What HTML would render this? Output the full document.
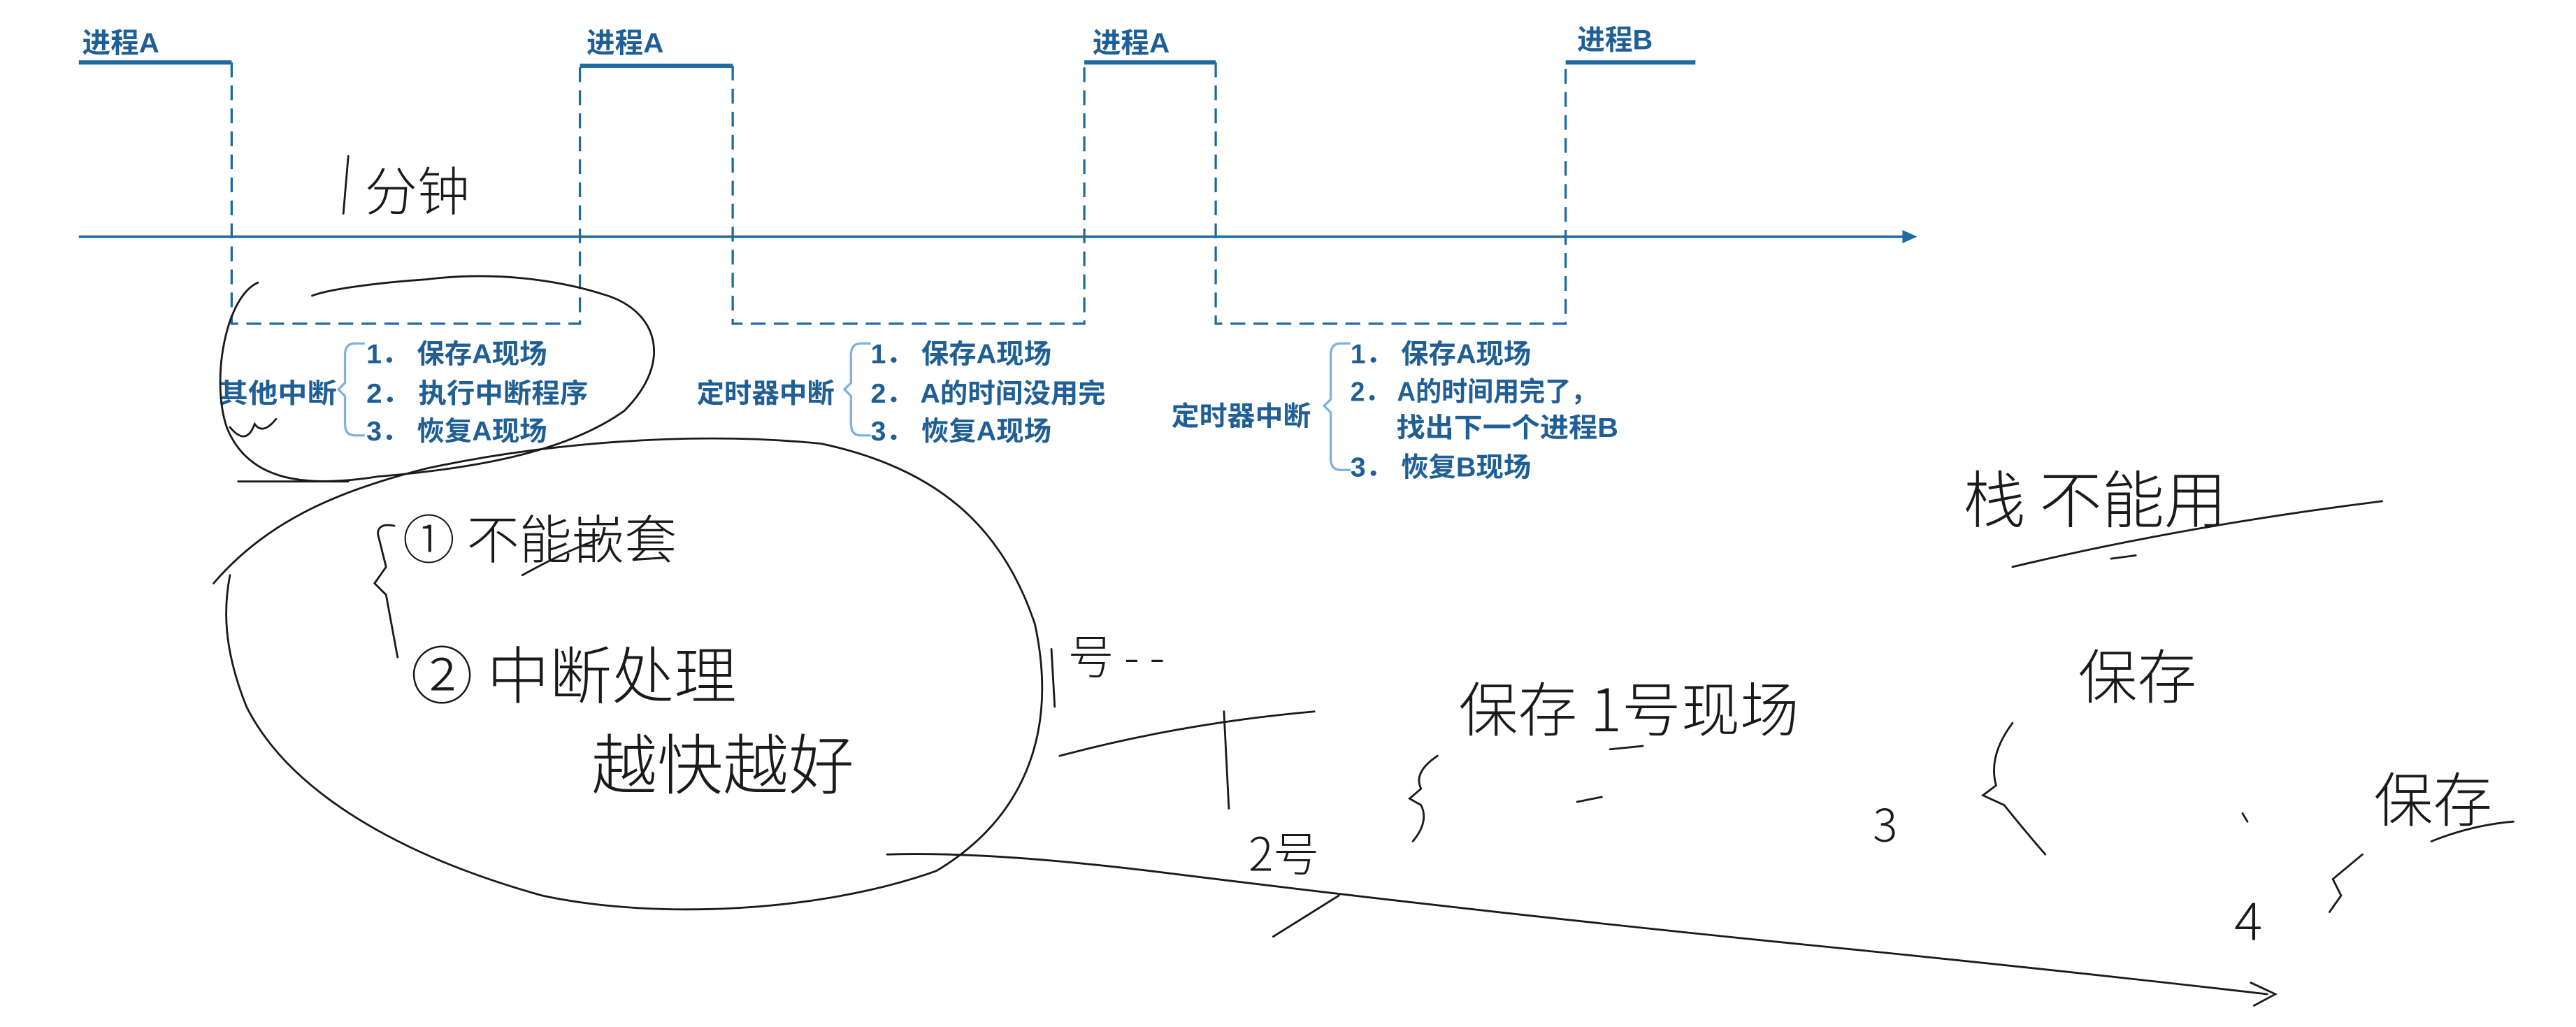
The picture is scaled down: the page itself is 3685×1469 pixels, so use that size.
<!DOCTYPE html>
<html><head><meta charset="utf-8"><style>
html,body{margin:0;padding:0;background:#fff;}
svg{display:block;}
.lb{font-family:"Liberation Sans","Noto Sans CJK SC",sans-serif;font-weight:bold;fill:#1f5f96;font-size:17px;}
.it{font-family:"Liberation Sans","Noto Sans CJK SC",sans-serif;font-weight:bold;fill:#1f5f96;font-size:16.5px;}
.hw{font-family:"Noto Sans CJK SC",sans-serif;font-weight:300;fill:#1a1a1a;}
</style></head><body>
<svg width="3685" height="1469" viewBox="0 0 1568 625" preserveAspectRatio="none">
<g stroke="#1f6aa0" fill="none">
 <path d="M48 38H141M353 40H446M660 38H740M953 38H1032" stroke-width="2.6"/>
 <path d="M141 38V197H353V40M446 40V197H660V38M740 38V197H953V38" stroke-width="1.4" stroke-dasharray="9 5"/>
 <path d="M48 144H1162" stroke-width="1.5"/>
</g>
<path d="M1158 140L1167 144L1158 148Z" fill="#1f6aa0"/>
<text class="lb" x="50" y="32" textLength="47" lengthAdjust="spacingAndGlyphs">进程A</text>
<text class="lb" x="357" y="32" textLength="47" lengthAdjust="spacingAndGlyphs">进程A</text>
<text class="lb" x="665" y="32" textLength="47" lengthAdjust="spacingAndGlyphs">进程A</text>
<text class="lb" x="960" y="30" textLength="46" lengthAdjust="spacingAndGlyphs">进程B</text>
<g stroke="#7fb0e0" fill="none" stroke-width="1.4">
 <path d="M222 209H216Q210 209 210 216V233L206 237L210 241V258Q210 265 216 265H222"/>
 <path d="M530 209H524Q518 209 518 216V233L514 237L518 241V258Q518 265 524 265H530"/>
 <path d="M822 209H816Q810 209 810 216V243L806 247L810 251V279Q810 286 816 286H822"/>
</g>
<text class="it" x="133" y="245" textLength="72" lengthAdjust="spacingAndGlyphs">其他中断</text>
<text class="it" x="223" y="221" textLength="110" lengthAdjust="spacingAndGlyphs">1． 保存A现场</text>
<text class="it" x="223" y="245" textLength="135" lengthAdjust="spacingAndGlyphs">2． 执行中断程序</text>
<text class="it" x="223" y="268" textLength="110" lengthAdjust="spacingAndGlyphs">3． 恢复A现场</text>
<text class="it" x="424" y="245" textLength="84" lengthAdjust="spacingAndGlyphs">定时器中断</text>
<text class="it" x="530" y="221" textLength="110" lengthAdjust="spacingAndGlyphs">1． 保存A现场</text>
<text class="it" x="530" y="245" textLength="143" lengthAdjust="spacingAndGlyphs">2． A的时间没用完</text>
<text class="it" x="530" y="268" textLength="110" lengthAdjust="spacingAndGlyphs">3． 恢复A现场</text>
<text class="it" x="713" y="259" textLength="85" lengthAdjust="spacingAndGlyphs">定时器中断</text>
<text class="it" x="822" y="221" textLength="110" lengthAdjust="spacingAndGlyphs">1． 保存A现场</text>
<text class="it" x="822" y="244" textLength="150" lengthAdjust="spacingAndGlyphs">2． A的时间用完了，</text>
<text class="it" x="850" y="266" textLength="135" lengthAdjust="spacingAndGlyphs">找出下一个进程B</text>
<text class="it" x="822" y="290" textLength="110" lengthAdjust="spacingAndGlyphs">3． 恢复B现场</text>
<g stroke="#1a1a1a" fill="none" stroke-width="1.2" stroke-linecap="round">
 <path d="M212 95L209 130"/>
 <path d="M157 172C138 180 128 230 138 260C150 290 180 298 230 290C290 285 345 275 380 250C410 220 400 190 370 180C340 170 300 165 260 170C230 172 200 176 190 180"/>
 <path d="M145 293H212M140 260Q150 272 155 258Q160 265 168 255"/>
 <path d="M130 355C160 320 200 300 260 285C330 270 420 262 500 270C570 285 610 320 630 380C645 450 620 500 570 530C500 555 400 560 330 545C240 520 175 480 150 430C138 400 135 375 140 350"/>
 <path d="M240 320Q230 318 230 325L235 345L228 355L235 362L242 400"/>
 <path d="M318 350Q345 335 365 328"/>
 <path d="M645 460Q720 440 800 433M745 433L748 492M540 520Q600 518 700 530Q900 555 1100 575Q1250 590 1380 605M1370 598L1385 605L1372 612"/>
 <path d="M775 570L815 545M960 488L975 485M980 456L1000 454"/>
 <path d="M875 460Q860 470 865 480L858 486L865 490Q870 500 860 512"/>
 <path d="M1225 345Q1330 320 1450 305M1285 340L1300 338"/>
 <path d="M1225 440Q1210 460 1215 478L1207 484L1220 490Q1232 505 1245 520"/>
 <path d="M1438 520L1420 535L1425 545L1418 555"/>
 <path d="M1480 512Q1505 502 1530 500M1365 495L1368 500"/>
 <path d="M640 395L642 430"/>
</g>
<text class="hw" x="222" y="128" font-size="32">分钟</text>
<text class="hw" x="245" y="340" font-size="32">① 不能嵌套</text>
<text class="hw" x="250" y="425" font-size="38">② 中断处理</text>
<text class="hw" x="360" y="480" font-size="40">越快越好</text>
<text class="hw" x="650" y="410" font-size="28">号 - -</text>
<text class="hw" x="760" y="530" font-size="28">2号</text>
<text class="hw" x="888" y="445" font-size="36">保存 1号现场</text>
<text class="hw" x="1195" y="318" font-size="38">栈 不能用</text>
<text class="hw" x="1265" y="425" font-size="36">保存</text>
<text class="hw" x="1140" y="512" font-size="28">3</text>
<text class="hw" x="1360" y="572" font-size="32">4</text>
<text class="hw" x="1445" y="500" font-size="36">保存</text>
</svg>
</body></html>
